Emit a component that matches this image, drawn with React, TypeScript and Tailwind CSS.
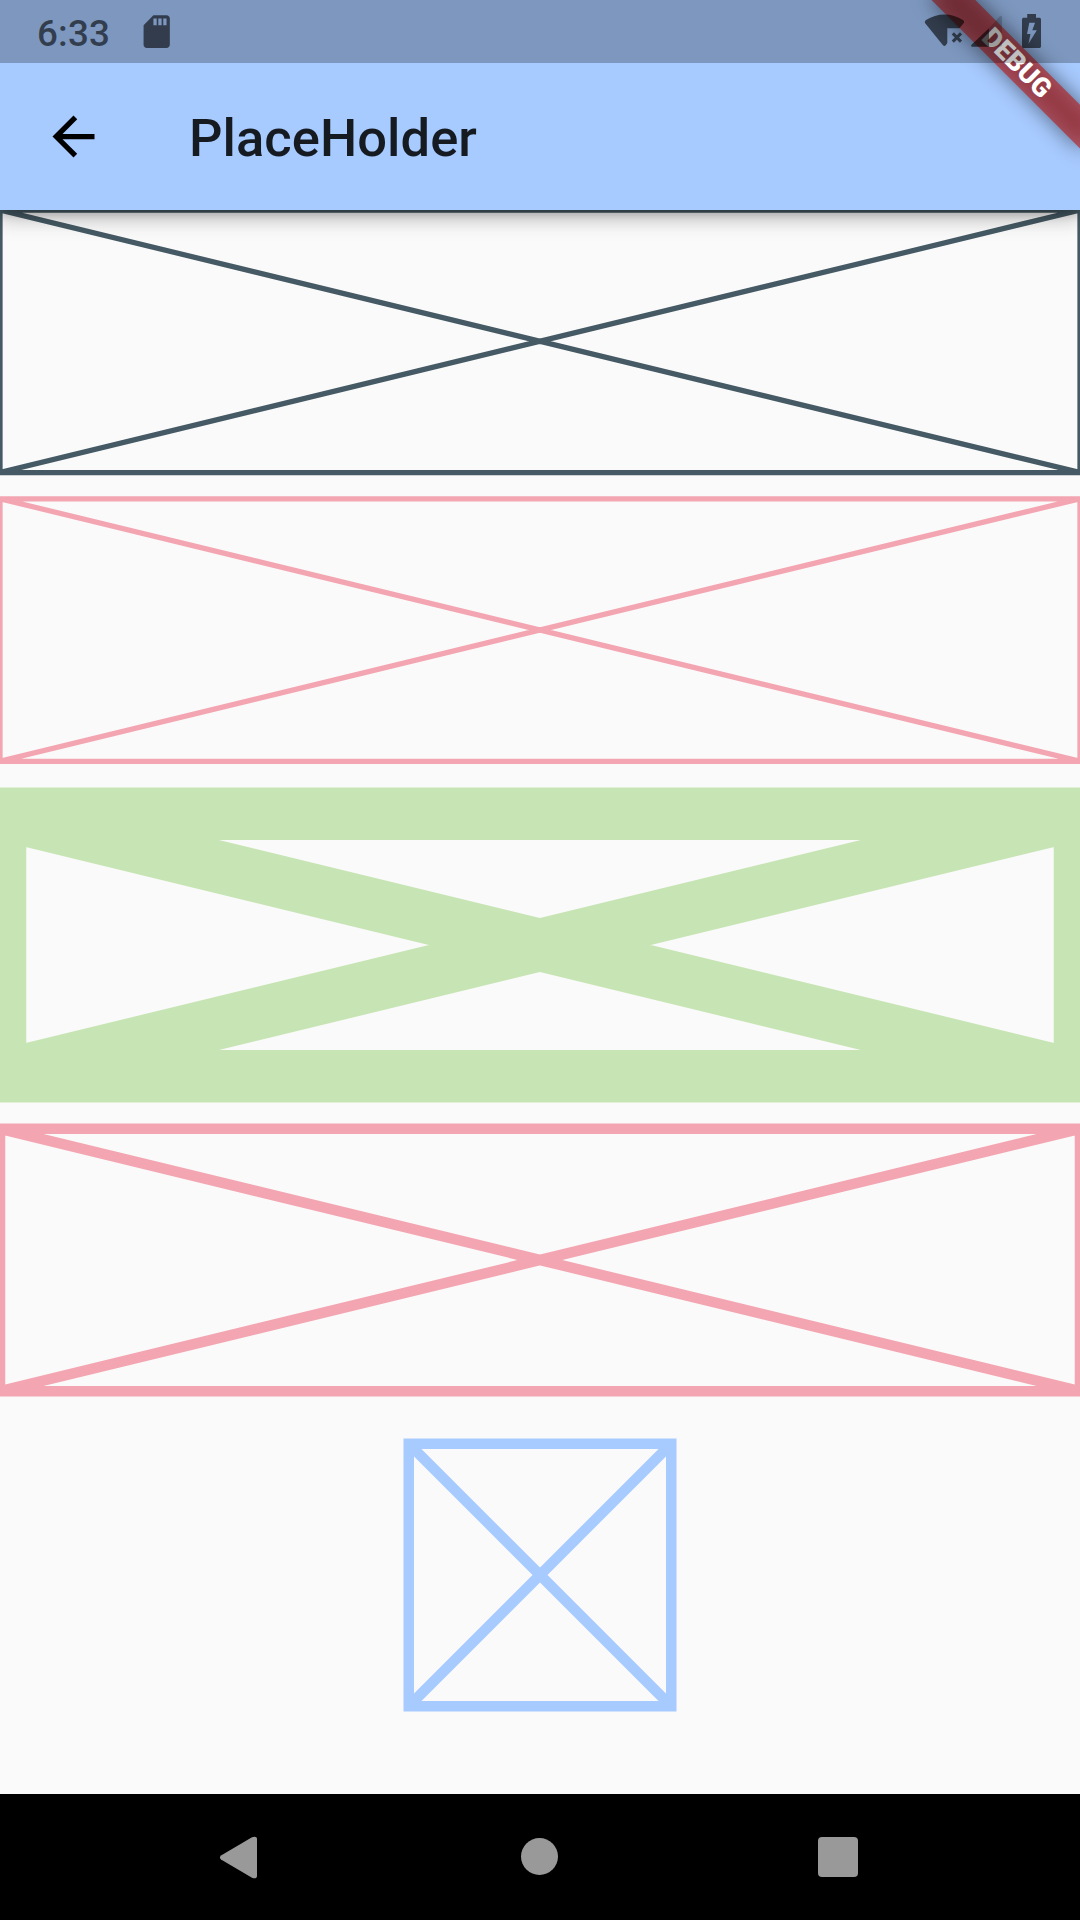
import React from "react";

type PlaceholderProps = {
  width: number;
  height: number;
  stroke: number;
  dx?: number;
  dy?: number;
  className: string;
};

// The outline is centred on the box edge, so half of the stroke spills outside.
// dx and dy hold the sub-pixel part of the position; the box itself sits on whole pixels.
function Placeholder({ width, height, stroke, dx = 0, dy = 0, className }: PlaceholderProps) {
  return (
    <svg
      className={`block shrink-0 overflow-visible ${className}`}
      width={Math.floor(width)}
      height={Math.floor(height)}
      fill="none"
      stroke="currentColor"
      strokeWidth={stroke}
    >
      <path
        transform={`translate(${dx} ${dy})`}
        d={`M0 0H${width}V${height}H0ZM${width} 0L0 ${height}M0 0L${width} ${height}`}
      />
    </svg>
  );
}

function StatusBar() {
  return (
    <div className="absolute inset-x-0 top-0 z-30 flex h-[63px] items-center bg-black/25 text-black/60">
      <span className="mt-[5px] ml-[37px] text-[36.75px] leading-none font-medium tracking-[0.2px]">6:33</span>
      <svg className="absolute top-[12px] left-[137px] size-[39.4px]" viewBox="0 0 24 24" fill="currentColor">
        <path d="M18 2h-8L4.02 8 4 20c0 1.1.9 2 2 2h12c1.1 0 2-.9 2-2V4c0-1.1-.9-2-2-2zm-6 6h-2V4h2v4zm3 0h-2V4h2v4zm3 0h-2V4h2v4z" />
      </svg>
      <svg className="absolute top-0 left-[920px] h-[63px] w-[130px]" viewBox="920 0 130 63" fill="currentColor">
        <path d="M925 23C924.500 22 925 21 926 20C937 12.500 952 12.500 963 20C964 21 964.500 22 963.800 23L959.500 28.300H947.300V43L945.800 45.200C944.800 46.300 944 46.300 943 45.200Z" />
        <path d="M952.800 33.400L961 41.600M961 33.400L952.800 41.600" stroke="currentColor" strokeWidth="3" fill="none" />
        <path d="M989 28.300V46.700H972.200C971 46.700 970.700 45.500 971.500 44.700Z" />
        <path d="M989 28.300L999.300 16.700C1000.500 15.500 1002 16 1002 17.500V44.700C1002 46 1001.300 46.700 1000 46.700H989Z" opacity=".3" />
        <path fillRule="evenodd" d="M1027.200 14H1036V17.800H1039C1040.400 17.800 1041 18.400 1041 19.800V46C1041 47.400 1040.400 48 1039 48H1024C1022.600 48 1022 47.400 1022 46V19.800C1022 18.400 1022.600 17.800 1024 17.800H1027.200ZM1035 22.800H1029.300L1027 34H1030.500L1028.500 43.800L1036.800 30.300H1032.300Z" />
      </svg>
    </div>
  );
}

function DebugBanner() {
  return (
    <div className="absolute top-0 right-0 z-20 size-[200px] overflow-hidden">
      <div className="absolute top-0 left-[200px] size-0 rotate-45">
        <div className="absolute top-[73.5px] -left-[105px] h-[31.5px] w-[210px] bg-black/50 blur-[10.4px]" />
        <div className="absolute top-[73.5px] -left-[105px] flex h-[31.5px] w-[210px] items-center justify-center bg-[#b71c1c]/63 text-[26.775px] leading-none font-black text-white">
          DEBUG
        </div>
      </div>
    </div>
  );
}

function AppBar() {
  return (
    <header className="relative z-10 h-[210px] shrink-0 bg-[#a7caff] pt-[63px] shadow-[0_4px_8px_rgba(0,0,0,0.16),0_8px_20px_rgba(0,0,0,0.28)]">
      <div className="flex h-[147px] items-center pl-[42px]">
        <svg className="size-[63px] text-black" viewBox="0 0 24 24" fill="currentColor">
          <path d="M20 11H7.830l5.590-5.590L12 4l-8 8 8 8 1.410-1.410L7.830 13H20v-2z" />
        </svg>
        <h1 className="mt-[4px] ml-[84px] text-[52.5px] leading-none font-medium tracking-[0.05px] text-black/87">
          PlaceHolder
        </h1>
      </div>
    </header>
  );
}

function NavigationBar() {
  return (
    <nav className="flex h-[126px] shrink-0 items-center bg-black pb-px text-[#999999]">
      <svg className="ml-[219px] h-[44px] w-[39px]" viewBox="0 0 39 44" fill="currentColor">
        <path d="M2 20.500L33 2.300C35.500 1 38 1.600 38 4V41C38 43.400 35.500 44 33 42.700L2 24.500C.6 23.500 .6 21.500 2 20.500Z" />
      </svg>
      <div className="ml-[263px] size-[37px] rounded-full bg-[#999999]" />
      <div className="ml-[260px] size-[40px] rounded-[4px] bg-[#999999]" />
    </nav>
  );
}

export default function App() {
  return (
    <div className="relative flex h-[1920px] w-[1080px] flex-col overflow-hidden bg-[#fafafa] font-['Roboto',sans-serif]">
      <StatusBar />
      <DebugBanner />
      <AppBar />
      <main className="flex flex-1 flex-col items-center gap-[53px]">
        <div className="flex flex-col gap-[26px]">
          <Placeholder width={1080} height={262.5} stroke={5.25} className="text-[#455a64]" />
          <Placeholder width={1080} height={262.5} stroke={5.25} dy={0.75} className="text-[#f3a6b2]" />
        </div>
        <Placeholder width={1080} height={262.5} stroke={52.5} dy={0.75} className="text-[#c7e5b4]" />
        <Placeholder width={1080} height={262.5} stroke={10.5} dy={0.75} className="text-[#f3a6b2]" />
        <Placeholder width={262.5} height={262.5} stroke={10.5} dx={-0.25} dy={0.75} className="text-[#a7caff]" />
      </main>
      <NavigationBar />
    </div>
  );
}
